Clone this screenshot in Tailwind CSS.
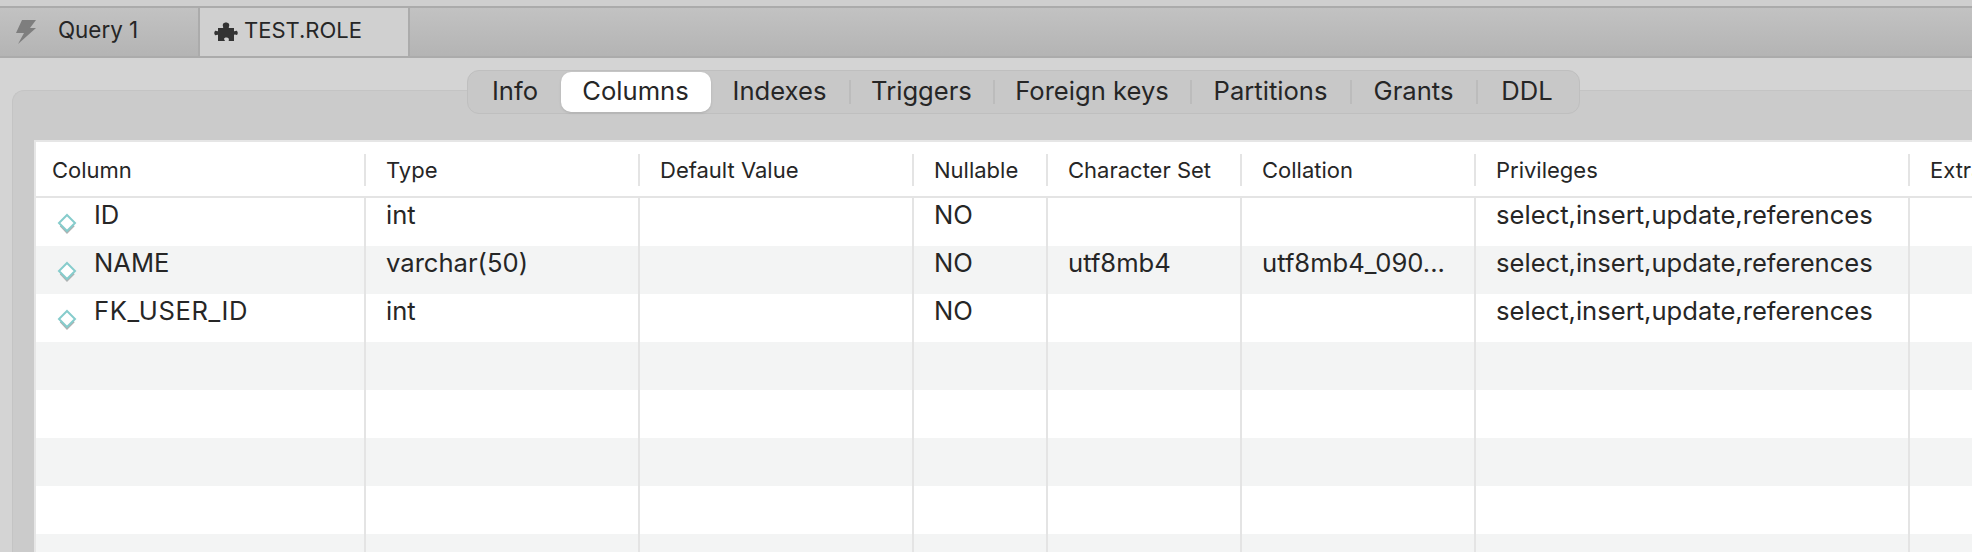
<!DOCTYPE html>
<html lang="en">
<head>
  <meta charset="UTF-8">
  <title>TEST.ROLE</title>
  <script src="https://cdn.jsdelivr.net/npm/@tailwindcss/browser@4"></script>
</head>
<body class="h-screen overflow-hidden bg-[#d4d4d4] font-['Inter','Liberation_Sans',sans-serif] text-[#262626]">
  <!-- Tab bar -->
  <div class="h-[6px] bg-[#cfcfcf]"></div>
  <div class="flex h-[52px] border-y-2 border-[#ababab] bg-gradient-to-b from-[#c2c2c2] to-[#b4b4b4]">
    <div class="flex w-[200px] items-center border-r-2 border-[#ababab]">
      <svg class="ml-[15px] h-[26px] w-[22px]" viewBox="0 0 22 26"><polygon points="7,1 21,1 15,9 21,9 3,25 9,14 1,14" fill="#7e7e7e"/></svg>
      <span class="mb-[4px] ml-[21px] text-[22.4px] leading-[26px]">Query 1</span>
    </div>
    <div class="flex w-[210px] items-center border-r-2 border-[#ababab] bg-[#d0d0d0]">
      <svg class="ml-[14px] h-[20px] w-[24px]" viewBox="0 0 24 20"><path d="M4 6h5c1-1-1-2 0-4 1-2 5-2 6 0 1 2-1 3 0 4h5v3c1 1 2-1 3 0 1 1 1 3 0 4-1 0-2-1-3 0v6h-5c-1-1 1-2-1-3-2-1-4 0-4 1l1 2H4v-6c-1-1-2 1-3 0-1-1-1-3 0-4 1-1 2 1 3 0z" fill="#333"/></svg>
      <span class="mb-[4px] ml-[6px] text-[22px] leading-[26px]">TEST.ROLE</span>
    </div>
  </div>

  <!-- Segmented control -->
  <div class="relative z-10 -mb-[24px] mt-[12px] flex justify-center">
    <div class="ml-[74px] flex h-[44px] items-center rounded-[12px] border border-[#bfbfbf] bg-[#c8c8c8] px-[2px] text-[25.6px] leading-[36px]">
      <div class="w-[91px] pb-[2px] text-center">Info</div>
      <div class="flex h-[40px] w-[150px] items-center justify-center rounded-[10px] bg-white pb-[2px] shadow-sm">Columns</div>
      <div class="flex w-[140px] items-center"><span class="flex-1 pb-[2px] text-center">Indexes</span><div class="h-[24px] w-[2px] bg-[#bcbcbc]"></div></div>
      <div class="flex w-[144px] items-center"><span class="flex-1 pb-[2px] text-center">Triggers</span><div class="h-[24px] w-[2px] bg-[#bcbcbc]"></div></div>
      <div class="flex w-[197px] items-center"><span class="flex-1 pb-[2px] text-center">Foreign keys</span><div class="h-[24px] w-[2px] bg-[#bcbcbc]"></div></div>
      <div class="flex w-[160px] items-center"><span class="flex-1 pb-[2px] text-center">Partitions</span><div class="h-[24px] w-[2px] bg-[#bcbcbc]"></div></div>
      <div class="flex w-[126px] items-center"><span class="flex-1 pb-[2px] text-center">Grants</span><div class="h-[24px] w-[2px] bg-[#bcbcbc]"></div></div>
      <div class="w-[99px] pb-[2px] text-center">DDL</div>
    </div>
  </div>

  <!-- Panel -->
  <div class="ml-[12px] h-[462px] rounded-tl-[12px] border-l border-t border-[#c4c4c4] bg-[#cbcbcb] pl-[21px] pt-[49px]">
    <div class="h-[412px] overflow-hidden border-l-2 border-t-2 border-[#e6e6e6] bg-white text-[25.6px] leading-[34px]">
      <div class="grid h-[56px] grid-cols-[330px_274px_274px_134px_194px_234px_434px_100px] border-b-2 border-[#e4e4e4] pt-[1px] text-[22px]">
        <div class="flex items-center"><div class="flex h-[32px] w-full items-center border-r-2 border-[#e4e4e4] pl-[16px]">Column</div></div>
        <div class="flex items-center"><div class="flex h-[32px] w-full items-center border-r-2 border-[#e4e4e4] pl-[20px]">Type</div></div>
        <div class="flex items-center"><div class="flex h-[32px] w-full items-center border-r-2 border-[#e4e4e4] pl-[20px]">Default Value</div></div>
        <div class="flex items-center"><div class="flex h-[32px] w-full items-center border-r-2 border-[#e4e4e4] pl-[20px]">Nullable</div></div>
        <div class="flex items-center"><div class="flex h-[32px] w-full items-center border-r-2 border-[#e4e4e4] pl-[20px]">Character Set</div></div>
        <div class="flex items-center"><div class="flex h-[32px] w-full items-center border-r-2 border-[#e4e4e4] pl-[20px]">Collation</div></div>
        <div class="flex items-center"><div class="flex h-[32px] w-full items-center border-r-2 border-[#e4e4e4] pl-[20px]">Privileges</div></div>
        <div class="flex items-center"><div class="flex h-[32px] w-full items-center pl-[20px]">Extra</div></div>
      </div>
      <div class="grid h-[48px] grid-cols-[330px_274px_274px_134px_194px_234px_434px_100px] bg-white">
        <div class="flex border-r-2 border-[#e4e4e4] pl-[20px]"><svg class="mt-[14px] h-[22px] w-[22px] shrink-0" viewBox="0 0 22 22"><path d="M4.5 13.5l6.5 7 7-7" fill="none" stroke="#b0b0b0" stroke-width="2"/><path d="M11 3l8 8-8 8-8-8z" fill="#fff" stroke="#86cccc" stroke-width="2"/></svg><span class="ml-[16px]">ID</span></div>
        <div class="border-r-2 border-[#e4e4e4] pl-[20px]">int</div>
        <div class="border-r-2 border-[#e4e4e4]"></div>
        <div class="border-r-2 border-[#e4e4e4] pl-[20px]">NO</div>
        <div class="border-r-2 border-[#e4e4e4]"></div>
        <div class="border-r-2 border-[#e4e4e4]"></div>
        <div class="border-r-2 border-[#e4e4e4] pl-[20px]">select,insert,update,references</div>
        <div></div>
      </div>
      <div class="grid h-[48px] grid-cols-[330px_274px_274px_134px_194px_234px_434px_100px] bg-[#f3f4f4]">
        <div class="flex border-r-2 border-[#e4e4e4] pl-[20px]"><svg class="mt-[14px] h-[22px] w-[22px] shrink-0" viewBox="0 0 22 22"><path d="M4.5 13.5l6.5 7 7-7" fill="none" stroke="#b0b0b0" stroke-width="2"/><path d="M11 3l8 8-8 8-8-8z" fill="#fff" stroke="#86cccc" stroke-width="2"/></svg><span class="ml-[16px]">NAME</span></div>
        <div class="border-r-2 border-[#e4e4e4] pl-[20px]">varchar(50)</div>
        <div class="border-r-2 border-[#e4e4e4]"></div>
        <div class="border-r-2 border-[#e4e4e4] pl-[20px]">NO</div>
        <div class="border-r-2 border-[#e4e4e4] pl-[20px]">utf8mb4</div>
        <div class="border-r-2 border-[#e4e4e4] pl-[20px]">utf8mb4_090...</div>
        <div class="border-r-2 border-[#e4e4e4] pl-[20px]">select,insert,update,references</div>
        <div></div>
      </div>
      <div class="grid h-[48px] grid-cols-[330px_274px_274px_134px_194px_234px_434px_100px] bg-white">
        <div class="flex border-r-2 border-[#e4e4e4] pl-[20px]"><svg class="mt-[14px] h-[22px] w-[22px] shrink-0" viewBox="0 0 22 22"><path d="M4.5 13.5l6.5 7 7-7" fill="none" stroke="#b0b0b0" stroke-width="2"/><path d="M11 3l8 8-8 8-8-8z" fill="#fff" stroke="#86cccc" stroke-width="2"/></svg><span class="ml-[16px] tracking-[0.6px]">FK_USER_ID</span></div>
        <div class="border-r-2 border-[#e4e4e4] pl-[20px]">int</div>
        <div class="border-r-2 border-[#e4e4e4]"></div>
        <div class="border-r-2 border-[#e4e4e4] pl-[20px]">NO</div>
        <div class="border-r-2 border-[#e4e4e4]"></div>
        <div class="border-r-2 border-[#e4e4e4]"></div>
        <div class="border-r-2 border-[#e4e4e4] pl-[20px]">select,insert,update,references</div>
        <div></div>
      </div>
      <div class="grid h-[48px] grid-cols-[330px_274px_274px_134px_194px_234px_434px_100px] bg-[#f3f4f4]">
        <div class="border-r-2 border-[#e4e4e4]"></div><div class="border-r-2 border-[#e4e4e4]"></div><div class="border-r-2 border-[#e4e4e4]"></div><div class="border-r-2 border-[#e4e4e4]"></div><div class="border-r-2 border-[#e4e4e4]"></div><div class="border-r-2 border-[#e4e4e4]"></div><div class="border-r-2 border-[#e4e4e4]"></div><div></div>
      </div>
      <div class="grid h-[48px] grid-cols-[330px_274px_274px_134px_194px_234px_434px_100px] bg-white">
        <div class="border-r-2 border-[#e4e4e4]"></div><div class="border-r-2 border-[#e4e4e4]"></div><div class="border-r-2 border-[#e4e4e4]"></div><div class="border-r-2 border-[#e4e4e4]"></div><div class="border-r-2 border-[#e4e4e4]"></div><div class="border-r-2 border-[#e4e4e4]"></div><div class="border-r-2 border-[#e4e4e4]"></div><div></div>
      </div>
      <div class="grid h-[48px] grid-cols-[330px_274px_274px_134px_194px_234px_434px_100px] bg-[#f3f4f4]">
        <div class="border-r-2 border-[#e4e4e4]"></div><div class="border-r-2 border-[#e4e4e4]"></div><div class="border-r-2 border-[#e4e4e4]"></div><div class="border-r-2 border-[#e4e4e4]"></div><div class="border-r-2 border-[#e4e4e4]"></div><div class="border-r-2 border-[#e4e4e4]"></div><div class="border-r-2 border-[#e4e4e4]"></div><div></div>
      </div>
      <div class="grid h-[48px] grid-cols-[330px_274px_274px_134px_194px_234px_434px_100px] bg-white">
        <div class="border-r-2 border-[#e4e4e4]"></div><div class="border-r-2 border-[#e4e4e4]"></div><div class="border-r-2 border-[#e4e4e4]"></div><div class="border-r-2 border-[#e4e4e4]"></div><div class="border-r-2 border-[#e4e4e4]"></div><div class="border-r-2 border-[#e4e4e4]"></div><div class="border-r-2 border-[#e4e4e4]"></div><div></div>
      </div>
      <div class="grid h-[48px] grid-cols-[330px_274px_274px_134px_194px_234px_434px_100px] bg-[#f3f4f4]">
        <div class="border-r-2 border-[#e4e4e4]"></div><div class="border-r-2 border-[#e4e4e4]"></div><div class="border-r-2 border-[#e4e4e4]"></div><div class="border-r-2 border-[#e4e4e4]"></div><div class="border-r-2 border-[#e4e4e4]"></div><div class="border-r-2 border-[#e4e4e4]"></div><div class="border-r-2 border-[#e4e4e4]"></div><div></div>
      </div>
    </div>
  </div>
</body>
</html>
